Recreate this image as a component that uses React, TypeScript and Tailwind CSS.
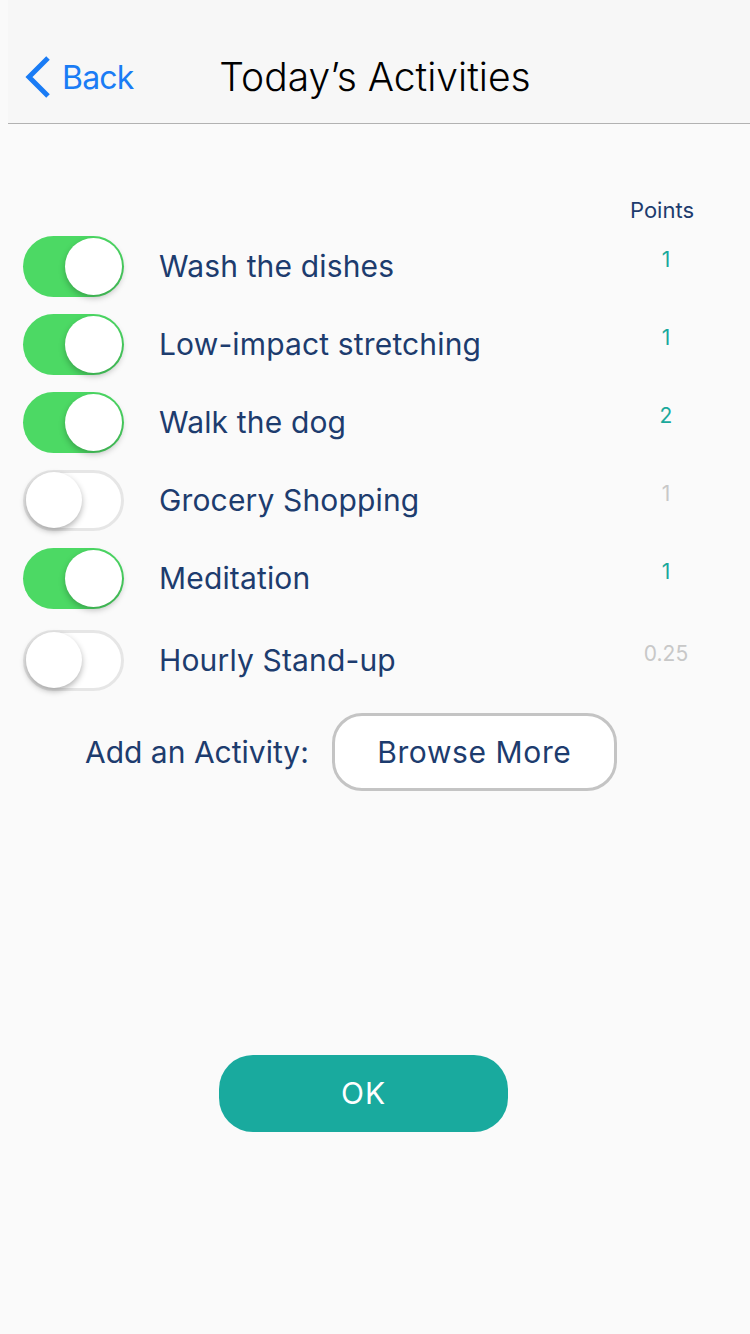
import React from "react";

type Activity = {
    name: string;
    points: string;
    on: boolean;
};

const activities: Activity[] = [
    { name: "Wash the dishes", points: "1", on: true },
    { name: "Low-impact stretching", points: "1", on: true },
    { name: "Walk the dog", points: "2", on: true },
    { name: "Grocery Shopping", points: "1", on: false },
    { name: "Meditation", points: "1", on: true },
    { name: "Hourly Stand-up", points: "0.25", on: false },
];

function Toggle({ on }: { on: boolean }) {
    return (
        <div
            className={
                on
                    ? "w-[101px] h-[61px] rounded-full bg-[#4cd964] flex items-center justify-end p-[2px]"
                    : "w-[101px] h-[61px] rounded-full bg-white border-[3px] border-[#e6e6e6] flex items-center justify-start"
            }
        >
            <div
                className={
                    on
                        ? "w-[57px] h-[57px] rounded-full bg-white shadow-[0_3px_6px_rgba(0,0,0,0.25)]"
                        : "w-[56px] h-[56px] rounded-full bg-white shadow-[0_3px_6px_rgba(0,0,0,0.3)]"
                }
            />
        </div>
    );
}

export default function App() {
    return (
        <div className="w-[750px] h-[1334px] bg-[#fafafa] font-['Inter',sans-serif] flex flex-col">
            <div className="ml-2 h-[124px] bg-[#f7f7f7] border-b border-[#b2b2b2] grid grid-cols-[1fr_auto_1fr] items-center pt-[32px] pr-2">
                <div className="flex items-center pl-[15px] gap-[9px]">
                    <svg width="30" height="46" viewBox="0 0 30 46">
                        <polyline points="25,3 6,22 25,41" fill="none" stroke="#1a7cf5" strokeWidth="5" />
                    </svg>
                    <span className="text-[32px] text-[#1a7cf5] tracking-tight">Back</span>
                </div>
                <div className="text-[39px] text-black font-light">Today’s Activities</div>
                <div />
            </div>

            <div className="flex flex-col pt-[72px] pl-[23px]">
                <div className="flex justify-end pr-[56px] text-[22px] text-[#1d3c6e] h-[28px] items-center">
                    Points
                </div>
                <div className="flex flex-col mt-[3px]">
                    {activities.map((a, i) => (
                        <div
                            key={i}
                            className={
                                i === 5
                                    ? "flex items-center h-[82px] pt-[4px]"
                                    : "flex items-center h-[78px]"
                            }
                        >
                            <Toggle on={a.on} />
                            <div className="flex-1 pl-[35px] text-[30px] text-[#1d3c6e] tracking-[0.005em]">
                                {a.name}
                            </div>
                            <div
                                className={
                                    a.on
                                        ? "w-[80px] mr-[44px] text-center text-[21px] text-[#1aa99c] mb-[12px]"
                                        : "w-[80px] mr-[44px] text-center text-[21px] text-[#c8c8c8] mb-[12px]"
                                }
                            >
                                {a.points}
                            </div>
                        </div>
                    ))}
                </div>
                <div className="flex items-center mt-[14px] pl-[62px] gap-[23px]">
                    <span className="text-[30px] text-[#1d3c6e]">Add an Activity:</span>
                    <button className="w-[285px] h-[78px] rounded-[30px] bg-white border-[3px] border-[#c4c4c4] text-[30px] text-[#1d3c6e] tracking-[0.02em]">
                        Browse More
                    </button>
                </div>
            </div>

            <div className="flex justify-center mt-[264px] pr-[23px]">
                <button className="w-[289px] h-[77px] rounded-[34px] bg-[#19aa9e] text-white text-[30px] tracking-[0.03em]">
                    OK
                </button>
            </div>
        </div>
    );
}
